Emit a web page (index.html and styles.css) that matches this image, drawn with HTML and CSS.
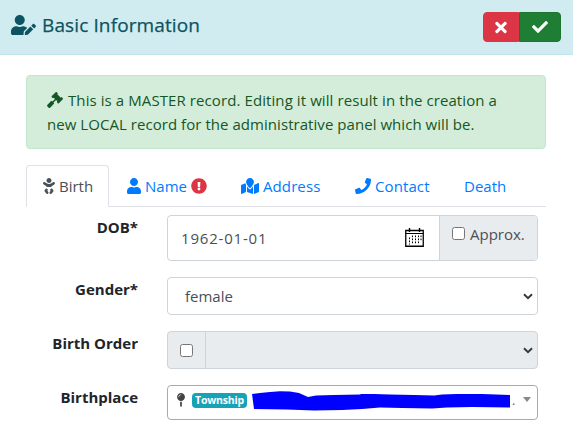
FILE: index.html
```html
<!DOCTYPE html>
<html lang="en">
<head>
<meta charset="utf-8">
<title>Basic Information</title>
<link rel="stylesheet" href="styles.css">
</head>
<body>
<header class="card-header">
  <h1 class="title">
    <svg class="icon-title" viewBox="0 0 640 512"><path d="M224 256c70.7 0 128-57.3 128-128S294.7 0 224 0 96 57.3 96 128s57.3 128 128 128zm89.6 32h-16.7c-22.2 10.2-46.9 16-72.9 16s-50.6-5.8-72.9-16h-16.7C60.2 288 0 348.2 0 422.4V464c0 26.5 21.5 48 48 48h274.9c-2.4-6.8-3.4-14-2.6-21.3l6.8-60.9 1.2-11.1 7.9-7.9 77.3-77.3c-24.5-27.7-60-45.5-99.9-45.5zm45.3 145.3l-6.8 61c-1.1 10.2 7.5 18.8 17.6 17.6l60.9-6.8 137.9-137.9-71.7-71.7-137.9 137.8zM633 268.9L595.1 231c-9.3-9.3-24.5-9.3-33.8 0l-37.8 37.8-4.1 4.1 71.8 71.7 41.8-41.8c9.3-9.4 9.3-24.5 0-33.9z"/></svg>
    <span>Basic Information</span>
  </h1>
  <div class="btn-group">
    <button class="btn btn-danger" aria-label="Cancel"><svg width="12" height="17" viewBox="0 0 352 512"><path d="M242.72 256l100.07-100.07c12.28-12.28 12.28-32.19 0-44.48l-22.24-22.24c-12.28-12.28-32.19-12.28-44.48 0L176 189.28 75.93 89.21c-12.28-12.28-32.19-12.28-44.48 0L9.21 111.45c-12.28 12.28-12.28 32.19 0 44.48L109.28 256 9.21 356.07c-12.28 12.28-12.28 32.19 0 44.48l22.24 22.24c12.28 12.28 32.2 12.28 44.48 0L176 322.72l100.07 100.07c12.28 12.28 32.2 12.28 44.48 0l22.24-22.24c12.28-12.28 12.28-32.19 0-44.48L242.72 256z"/></svg></button>
    <button class="btn btn-success" aria-label="Save"><svg width="16" height="16" viewBox="0 0 512 512"><path d="M173.898 439.404l-166.4-166.4c-9.997-9.997-9.997-26.206 0-36.204l36.203-36.204c9.997-9.998 26.207-9.998 36.204 0L192 312.69 432.095 72.596c9.997-9.997 26.207-9.997 36.204 0l36.203 36.204c9.997 9.997 9.997 26.206 0 36.204l-294.4 294.401c-9.998 9.997-26.207 9.997-36.204-.001z"/></svg></button>
  </div>
</header>
<main>
  <div class="alert">
    <div class="line line-1"><svg width="16" height="16" viewBox="0 0 512 512"><path d="M504.971 199.362l-22.627-22.627c-9.373-9.373-24.569-9.373-33.941 0l-5.657 5.657L329.608 69.255l5.657-5.657c9.373-9.373 9.373-24.569 0-33.941L312.638 7.029c-9.373-9.373-24.569-9.373-33.941 0L154.246 131.48c-9.373 9.373-9.373 24.569 0 33.941l22.627 22.627c9.373 9.373 24.569 9.373 33.941 0l5.657-5.657 39.598 39.598-81.04 81.04-5.657-5.657c-12.497-12.497-32.758-12.497-45.255 0L9.373 412.118c-12.497 12.497-12.497 32.758 0 45.255l45.255 45.255c12.497 12.497 32.758 12.497 45.255 0l114.745-114.745c12.497-12.497 12.497-32.758 0-45.255l-5.657-5.657 81.04-81.04 39.598 39.598-5.657 5.657c-9.373 9.373-9.373 24.569 0 33.941l22.627 22.627c9.373 9.373 24.569 9.373 33.941 0l124.451-124.451c9.372-9.372 9.372-24.568 0-33.941z"/></svg><span>This is a MASTER record. Editing it will result in the creation a</span></div>
    <div class="line line-2">new LOCAL record for the administrative panel which will be.</div>
  </div>
  <nav class="tabs">
    <a class="tab tab-birth active"><svg width="12" height="16" viewBox="0 0 384 512"><path d="M192 160c44.2 0 80-35.8 80-80S236.2 0 192 0s-80 35.8-80 80 35.8 80 80 80zm-53.4 248.8l25.6-32-61.5-51.2L56.8 383c-11.4 14.2-11.7 34.4-.8 49l48 64c7.9 10.5 19.9 16 32 16 8.3 0 16.8-2.6 24-8 17.7-13.2 21.2-38.3 8-56l-29.4-39.2zm142.7-83.2l-61.5 51.2 25.6 32L216 448c-13.2 17.7-9.7 42.8 8 56 7.2 5.4 15.6 8 24 8 12.2 0 24.2-5.5 32-16l48-64c10.9-14.6 10.6-34.8-.8-49l-45.9-57.4zM376.7 145c-12.7-18.1-37.6-22.4-55.7-9.8l-40.6 28.5c-52.7 37-124.2 37-176.8 0L63 135.3C44.9 122.6 20 127 7.3 145-5.4 163.1-1 188 17 200.7l40.6 28.5c17 11.9 35.4 20.9 54.4 27.9V288h160v-30.8c19-7 37.4-16 54.4-27.9l40.6-28.5c18.1-12.8 22.4-37.7 9.7-55.8z"/></svg><span>Birth</span></a>
    <a class="tab tab-name"><svg width="14" height="16" viewBox="0 0 448 512"><path d="M224 256c70.7 0 128-57.3 128-128S294.7 0 224 0 96 57.3 96 128s57.3 128 128 128zm89.6 32h-16.7c-22.2 10.2-46.9 16-72.9 16s-50.6-5.8-72.9-16h-16.7C60.2 288 0 348.2 0 422.4V464c0 26.5 21.5 48 48 48h352c26.5 0 48-21.5 48-48v-41.6c0-74.2-60.2-134.4-134.4-134.4z"/></svg><span>Name</span><svg class="warn" width="16" height="16" viewBox="0 0 512 512"><path d="M504 256c0 136.997-111.043 248-248 248S8 392.997 8 256C8 119.083 119.043 8 256 8s248 111.083 248 248zm-248 50c-25.405 0-46 20.595-46 46s20.595 46 46 46 46-20.595 46-46-20.595-46-46-46zm-43.673-165.346l7.418 136c.347 6.364 5.609 11.346 11.982 11.346h48.546c6.373 0 11.635-4.982 11.982-11.346l7.418-136c.375-6.874-5.098-12.654-11.982-12.654h-63.383c-6.884 0-12.356 5.78-11.981 12.654z"/></svg></a>
    <a class="tab tab-address"><svg width="18" height="16" viewBox="0 0 576 512"><path d="M288 0c-69.59 0-126 56.41-126 126 0 56.26 82.35 158.8 113.9 196.02 6.39 7.54 17.82 7.54 24.2 0C331.65 284.8 414 182.26 414 126 414 56.41 357.59 0 288 0zM20.12 215.95A32.006 32.006 0 0 0 0 245.66v250.32c0 11.32 11.43 19.06 21.94 14.86L160 448V214.92c-8.84-15.98-16.07-31.54-21.25-46.42L20.12 215.95zM288 359.67c-14.07 0-27.38-6.18-36.51-16.96-19.66-23.2-40.57-49.62-59.49-76.72v182l192 64V266c-18.92 27.09-39.82 53.52-59.49 76.72-9.13 10.77-22.44 16.95-36.51 16.95zm266.06-198.51L416 224v288l139.88-55.95A31.996 31.996 0 0 0 576 426.34V176.02c0-11.32-11.43-19.06-21.94-14.86z"/></svg><span>Address</span></a>
    <a class="tab tab-contact"><svg width="16" height="16" viewBox="0 0 512 512"><path d="M493.4 24.6l-104-24c-11.3-2.6-22.9 3.3-27.5 13.9l-48 112c-4.2 9.8-1.4 21.3 6.9 28l60.6 49.6c-36 76.7-98.9 140.5-177.2 177.2l-49.6-60.6c-6.8-8.3-18.2-11.1-28-6.9l-112 48C3.9 366.5-2 378.1.6 389.4l24 104C27.1 504.2 36.7 512 48 512c256.1 0 464-207.5 464-464 0-11.2-7.7-20.9-18.6-23.4z"/></svg><span>Contact</span></a>
    <a class="tab tab-death"><span>Death</span></a>
  </nav>
  <form class="form">
    <label class="label">DOB*</label>
    <div class="control dob">
      <span class="date">1962-01-01</span>
      <svg class="calendar" width="19" height="19" viewBox="0 0 19 19"><path d="M.75 2.5h17.5v15.75H.75z" fill="#fff" stroke="#000" stroke-width="1.3"/><path d="M1 5.5h17" stroke="#000"/><path d="M4.5 0v4M14.5 0v4" stroke="#000" stroke-width="1.4"/><path d="M7.5 7.500v9M10.500 7.500v9M13.500 7.500v9M16 7.500v6M4.500 9.500v7" stroke="#000" stroke-width="1" stroke-dasharray="1.700 1.300"/></svg>
      <div class="approx"><input type="checkbox"><span>Approx.</span></div>
    </div>
    <label class="label">Gender*</label>
    <div class="control select"><span class="value">female</span><svg class="chevron" width="10" height="7" viewBox="0 0 10 7"><path d="M1 1.200l4 4 4-4"/></svg></div>
    <label class="label">Birth Order</label>
    <div class="control select disabled"><div class="check"><input type="checkbox"></div><svg class="chevron" width="10" height="7" viewBox="0 0 10 7"><path d="M1 1.200l4 4 4-4"/></svg></div>
    <label class="label">Birthplace</label>
    <div class="control place">
      <svg class="pin" width="8" height="14" viewBox="0 0 288 512"><path d="M112 316.940v156.690l22.020 33.020c4.750 7.120 15.220 7.120 19.970 0L176 473.630V316.940c-10.390 1.920-21.060 3.060-32 3.060s-21.610-1.140-32-3.060zM144 0C64.470 0 0 64.470 0 144s64.470 144 144 144 144-64.470 144-144S223.530 0 144 0zm0 76c-37.500 0-68 30.500-68 68 0 6.620-5.380 12-12 12s-12-5.380-12-12c0-50.730 41.280-92 92-92 6.620 0 12 5.380 12 12s-5.380 12-12 12z"/></svg>
      <span class="badge">Township</span>
      <svg class="scribble" width="259" height="20" viewBox="0 0 259 20"><path d="M0 3L8 2 18 1 28 .3 38 .5 47 2 56 6 64 4.500 82 4 108 3.500 109 3 122 3 138 3.500 162 4 182 4.500 190 3.500 205 3 230 3 258 4V16.500L220 16 195 16.500 180 17.500 150 17 128 16.500 110 18 90 19 62 19.500 35 18.500 2 18Z"/></svg>
      <span class="dot">.</span>
      <i class="arrow"></i>
    </div>
  </form>
</main>
</body>
</html>
```
FILE: styles.css
```css
* { box-sizing: border-box; }
body {
  margin: 0;
  background: #fff;
  color: #212529;
  font: 15px/24px "Open Sans", "Noto Sans", sans-serif;
  white-space: nowrap;
}
svg { display: block; flex: none; fill: currentColor; }
input[type="checkbox"] { width: 13px; height: 13px; margin: 0; flex: none; }

.card-header {
  display: flex;
  justify-content: space-between;
  height: 55px;
  padding: 12px 12px 0 11px;
  background: #d1ecf1;
  border-bottom: 1px solid #bee5eb;
}
.title {
  display: flex;
  gap: 6px;
  margin: 0;
  color: #0c5460;
  font-size: 19px;
  font-weight: 500;
  letter-spacing: .12px;
  line-height: 26px;
  -webkit-text-stroke: .25px #0c5460;
}
.icon-title { width: 25px; height: 20px; margin-top: 3px; }
.btn-group { display: flex; height: 30px; }
.btn {
  display: flex;
  align-items: center;
  justify-content: center;
  padding: 0;
  border: 1px solid;
  color: #fff;
}
.btn-danger { width: 36px; background: #dc3545; border-color: #dc3545; border-radius: 4px 0 0 4px; }
.btn-success { width: 42px; background: #1e7e34; border-color: #1c7430; border-radius: 0 4px 4px 0; }

main { padding: 20px 27px 0 26px; }
.alert {
  height: 74px;
  padding: 12px 20px;
  background: #d4edda;
  border: 1px solid #c3e6cb;
  border-radius: 4px;
  color: #155724;
}
.line { height: 24px; }
.line-1 { display: flex; gap: 5px; letter-spacing: .09px; }
.line-1 svg { margin-top: 4px; }
.line-2 { letter-spacing: .05px; }

.tabs {
  display: flex;
  height: 42px;
  margin-top: 16px;
  border-bottom: 1px solid #dee2e6;
  color: #007bff;
}
.tab {
  display: flex;
  gap: 4px;
  height: 42px;
  padding: 9px 0 0 17px;
}
.tab svg { margin-top: 4px; }
.tab .warn { color: #dc3545; }
.tab-birth { width: 83px; }
.tab-name { width: 115px; padding-left: 18px; }
.tab-address { width: 114px; letter-spacing: .1px; }
.tab-contact { width: 109px; letter-spacing: .1px; }
.active {
  padding: 8px 0 0 16px;
  background: #fff;
  border: 1px solid #dee2e6;
  border-bottom-color: #fff;
  border-radius: 4px 4px 0 0;
  color: #495057;
}

.form {
  display: grid;
  grid-template-columns: 112px 371px;
  grid-template-rows: 46px 38px 38px 35px;
  column-gap: 29px;
  row-gap: 16px;
  margin-top: 8px;
}
.label { font-weight: 700; text-align: right; }
.control {
  display: flex;
  align-items: center;
  overflow: hidden;
  border: 1px solid #ced4da;
  border-radius: 4px;
  color: #495057;
}
.date { flex: 1; padding-left: 13px; letter-spacing: .8px; }
.calendar { margin: 0 15px 2px 0; }
.approx {
  display: flex;
  gap: 5px;
  width: 98px;
  height: 44px;
  padding: 6px 0 0 12px;
  background: #e9ecef;
  border-left: 1px solid #ced4da;
}
.approx input { margin-top: 5px; }
.select { justify-content: space-between; padding-right: 4px; }
.value { padding-left: 17px; }
.chevron { fill: none; stroke: #343a40; stroke-width: 2; }
.disabled { background: #e9ecef; }
.check {
  display: flex;
  align-items: center;
  height: 36px;
  width: 38px;
  padding-left: 12px;
  border-right: 1px solid #ced4da;
}
.place { border-color: #aaa; padding: 0 6px 4px 9px; }
.pin { color: #444; margin-bottom: 2px; }
.badge {
  width: 55px;
  height: 15px;
  margin-left: 7px;
  background: #17a2b8;
  border-radius: 4px;
  color: #fff;
  font-size: 10.5px;
  font-weight: 700;
  line-height: 15px;
  letter-spacing: -.2px;
  text-align: center;
}
.scribble { margin-left: 5px; color: #00f; }
.dot { flex: 1; padding-left: 1px; font-size: 12px; }
.arrow {
  margin-bottom: 2px;
  border: 4px solid transparent;
  border-top: 5px solid #888;
  border-bottom: 0;
}
```
